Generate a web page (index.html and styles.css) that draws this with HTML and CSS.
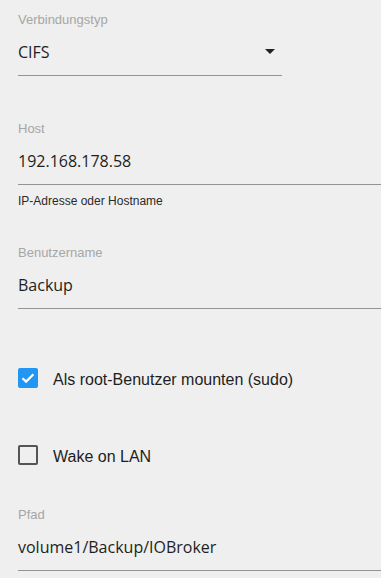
FILE: index.html
```html
<!DOCTYPE html>
<html lang="de">
<head>
<meta charset="utf-8">
<title>Verbindung</title>
<link rel="stylesheet" href="styles.css">
</head>
<body>
<form class="form">
  <div class="field field-select">
    <div class="label">Verbindungstyp</div>
    <div class="input">
      <span class="value">CIFS</span>
      <svg class="arrow" width="10" height="5" viewBox="0 0 10 5"><path d="M0 0h10L5 5z" fill="#222"/></svg>
    </div>
  </div>

  <div class="field field-host">
    <div class="label">Host</div>
    <div class="input"><span class="value">192.168.178.58</span></div>
  </div>
  <div class="helper">IP-Adresse oder Hostname</div>

  <div class="field field-user">
    <div class="label">Benutzername</div>
    <div class="input"><span class="value">Backup</span></div>
  </div>

  <label class="check check-sudo">
    <svg class="box" width="20" height="20" viewBox="0 0 20 20"><rect x="0" y="0" width="20" height="20" rx="2" fill="#2196f3"/><path d="M4.5 10.2l3.6 3.4 7.3-7.4" fill="none" stroke="#fff" stroke-width="2.2"/></svg>
    <span class="check-label">Als root-Benutzer mounten (sudo)</span>
  </label>

  <label class="check check-wol">
    <svg class="box" width="20" height="20" viewBox="0 0 20 20"><rect x="1" y="1" width="18" height="18" rx="1" fill="none" stroke="#555" stroke-width="2"/></svg>
    <span class="check-label">Wake on LAN</span>
  </label>

  <div class="field field-path">
    <div class="label">Pfad</div>
    <div class="input"><span class="value">volume1/Backup/IOBroker</span></div>
  </div>
</form>
</body>
</html>
```

FILE: styles.css
```css
html, body {
  margin: 0;
  padding: 0;
  background: #efefef;
  height: 100%;
  overflow: hidden;
}

.form {
  display: flex;
  flex-direction: column;
  padding-left: 18px;
}

.field {
  display: flex;
  flex-direction: column;
}

.label {
  font-family: "Liberation Sans", Arial, sans-serif;
  font-size: 13px;
  line-height: 16px;
  color: #a6a6a6;
}

.input {
  display: flex;
  align-items: center;
  justify-content: space-between;
  margin-top: 12px;
  height: 24px;
  padding-bottom: 11px;
  border-bottom: 1px solid #939393;
}

.value {
  font-family: "Open Sans", "Noto Sans", sans-serif;
  font-size: 16px;
  line-height: 24px;
  color: #1e1e1e;
}

.field-select {
  margin-top: 12px;
  width: 264px;
}

.arrow {
  margin-right: 7px;
  margin-bottom: 1px;
}

.field-host {
  margin-top: 45px;
}

.helper {
  margin-top: 8px;
  font-family: "Liberation Sans", Arial, sans-serif;
  font-size: 12px;
  line-height: 16px;
  color: #2a2a2a;
}

.field-user {
  margin-top: 36px;
}

.check {
  display: flex;
  align-items: center;
  height: 20px;
  gap: 15px;
}

.box {
  flex: none;
  display: block;
}

.check-label {
  font-family: "Liberation Sans", Arial, sans-serif;
  font-size: 16px;
  line-height: 20px;
  padding-top: 3px;
  color: #1e1e1e;
}

.check-sudo {
  margin-top: 59px;
}

.check-wol {
  margin-top: 57px;
}

.field-path {
  margin-top: 42px;
}
```
